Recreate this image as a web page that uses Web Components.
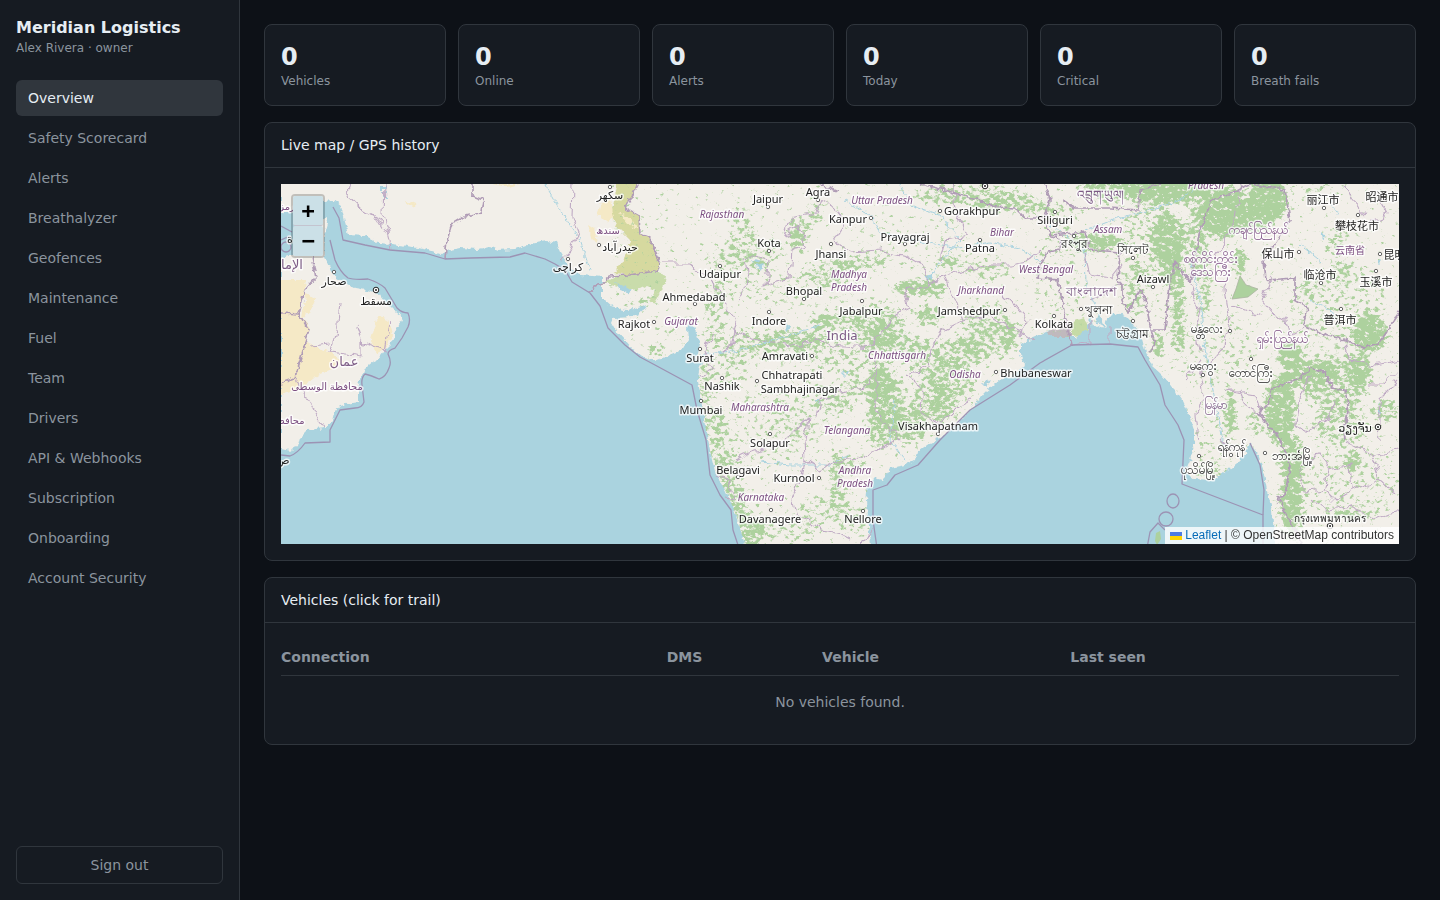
<!DOCTYPE html>
<html lang="en">
<head>
<meta charset="utf-8">
<meta name="viewport" content="width=device-width, initial-scale=1">
<title>Meridian Logistics</title>
<style>
  :root {
    --bg: #0d1117; --panel: #161b22; --line: #30363d; --text: #e6edf3; --muted: #8b949e;
  }
  body { margin: 0; background: var(--bg); color: var(--text); font: 14px/20px "DejaVu Sans", sans-serif; }
</style>
</head>
<body>
<fleet-app>
  <fleet-sidebar slot="side" company="Meridian Logistics" user="Alex Rivera · owner"></fleet-sidebar>
  <stat-row>
    <stat-card value="0">Vehicles</stat-card>
    <stat-card value="0">Online</stat-card>
    <stat-card value="0">Alerts</stat-card>
    <stat-card value="0">Today</stat-card>
    <stat-card value="0">Critical</stat-card>
    <stat-card value="0">Breath fails</stat-card>
  </stat-row>
  <panel-card heading="Live map / GPS history"><live-map></live-map></panel-card>
  <panel-card heading="Vehicles (click for trail)"><vehicle-table></vehicle-table></panel-card>
</fleet-app>

<script>
class Base extends HTMLElement {
  connectedCallback() {
    if (!this.shadowRoot) this.attachShadow({ mode: "open" }).innerHTML = this.render();
  }
}

customElements.define("fleet-app", class extends Base {
  render() {
    return `<style>
      :host { display: grid; grid-template-columns: 240px minmax(0, 1fr); min-height: 100vh; }
      main { display: flex; flex-direction: column; gap: 16px; padding: 24px; }
    </style><slot name="side"></slot><main><slot></slot></main>`;
  }
});

customElements.define("fleet-sidebar", class extends Base {
  render() {
    const items = ["Overview", "Safety Scorecard", "Alerts", "Breathalyzer", "Geofences", "Maintenance", "Fuel",
      "Team", "Drivers", "API &amp; Webhooks", "Subscription", "Onboarding", "Account Security"];
    return `<style>
      :host { display: flex; flex-direction: column; box-sizing: border-box; padding: 16px;
        background: var(--panel); border-right: 1px solid var(--line); }
      header { margin-bottom: 24px; }
      h1 { margin: 0; font-size: 16px; line-height: 24px; }
      p { margin: 0; font-size: 12px; line-height: 16px; color: var(--muted); }
      nav { display: flex; flex-direction: column; gap: 4px; flex: 1; }
      a { padding: 8px 12px; border-radius: 6px; color: var(--muted); text-decoration: none; }
      a[aria-current] { background: var(--line); color: var(--text); }
      button { font: inherit; color: var(--muted); background: none; border: 1px solid var(--line);
        border-radius: 6px; padding: 8px 12px; cursor: pointer; }
    </style>
    <header><h1>${this.getAttribute("company")}</h1><p>${this.getAttribute("user")}</p></header>
    <nav>${items.map((t, i) => `<a href="#"${i ? "" : ' aria-current="page"'}>${t}</a>`).join("")}</nav>
    <button type="button">Sign out</button>`;
  }
});

customElements.define("stat-row", class extends Base {
  render() {
    return `<style>:host { display: grid; grid-template-columns: repeat(6, minmax(0, 1fr)); gap: 12px; }</style><slot></slot>`;
  }
});

customElements.define("stat-card", class extends Base {
  render() {
    return `<style>
      :host { display: block; padding: 16px; background: var(--panel); border: 1px solid var(--line); border-radius: 8px; }
      b { display: block; font-size: 24px; line-height: 32px; }
      span { display: block; font-size: 12px; line-height: 16px; color: var(--muted); }
    </style><b>${this.getAttribute("value")}</b><span><slot></slot></span>`;
  }
});

customElements.define("panel-card", class extends Base {
  render() {
    return `<style>
      :host { display: block; background: var(--panel); border: 1px solid var(--line); border-radius: 8px; }
      h2 { margin: 0; padding: 12px 16px; font-size: 14px; font-weight: 400; border-bottom: 1px solid var(--line); }
      div { padding: 16px; }
    </style><h2>${this.getAttribute("heading")}</h2><div><slot></slot></div>`;
  }
});

customElements.define("vehicle-table", class extends Base {
  render() {
    return `<style>
      :host { display: block; color: var(--muted); }
      table { width: 100%; border-collapse: separate; border-spacing: 0; table-layout: fixed; }
      th { padding: 8px 0; text-align: left; border-bottom: 1px solid var(--line); }
      th:nth-child(1) { width: 34.5%; } th:nth-child(2) { width: 13.9%; } th:nth-child(3) { width: 22.2%; }
      td { padding: 16px 0; text-align: center; }
    </style>
    <table><thead><tr><th scope="col">Connection</th><th scope="col">DMS</th><th scope="col">Vehicle</th><th scope="col">Last seen</th></tr></thead>
    <tbody><tr><td colspan="4">No vehicles found.</td></tr></tbody></table>`;
  }
});

/* Map geometry. One unit is one map pixel; the view starts at 281,184. */
const WEST_ASIA = "M281 180H660V300L602 300 602 277 592 276 582 275 575 272 568 264 563 257 560 252 556 243 548 241 530 244 515 249 498 250 490 246 478 249 460 248 450 250 440 254 428 250 408 246 391 244 378 243 365 236 349 235 345 222 341 206 333 200 324 201 281 214Z";
const OMAN = "M281 258L292 255 300 245 316 232 325 216 328 222 324 236 325 257 330 268 336 278 345 283 355 288 367 290 378 293 385 302 393 310 403 317 399 325 395 335 390 345 383 352 377 360 370 364 364 370 361 378 358 388 358 402 340 405 334 412 332 420 326 428 308 430 300 438 298 446 290 451 281 449Z";
const INDIA = "M606 180L615 277 603 288 602 294 605 300 612 306 625 310 635 309 647 305 642 312 632 317 614 318 612 323 616 330 625 340 632 348 645 358 655 361 670 355 682 350 688 340 687 328 689 324 694 325 697 335 700 345 697 358 702 363 699 370 698 380 701 398 704 420 707 435 711 455 716 475 725 490 732 505 738 520 742 535 746 548 871 548 870 532 867 518 866 500 868 485 874 478 882 480 885 475 890 468 905 465 915 460 917 452 930 443 945 435 960 422 975 405 985 392 1000 380 1010 377 1025 365 1020 355 1020 345 1028 340 1040 335 1050 330 1060 337 1075 337 1080 332 1095 325 1105 328 1107 318 1118 312 1128 318 1135 327 1142 339 1145 350 1152 366 1162 375 1172 386 1182 400 1188 412 1194 430 1194 445 1190 460 1185 472 1195 479 1210 480 1220 475 1235 465 1245 455 1250 443 1258 455 1263 470 1267 490 1272 510 1275 548 1405 548V180Z";

/* cx, cy, rx, ry, density */
const FOREST = [
  [1225,212,26,26,1],[1268,200,20,24,1],[1250,216,26,16,1],[1165,190,45,14,1],[1108,190,30,12,.7],[1096,242,26,9,.95],
  [1168,240,18,28,.8],[1172,260,12,28,.8],[1198,230,12,28,.6],[1240,262,7,14,.9],[1178,310,7,45,.8],
  [1135,290,12,26,.5],[1128,340,8,22,.45],[1158,345,6,14,.8],[1205,290,8,26,.55],[1200,262,14,12,.6],
  [1290,354,14,14,.9],[1230,412,6,24,.9],[1280,410,16,36,.9],[1310,372,28,14,.8],[1335,385,34,28,.55],[1360,370,12,16,.9],
  [1292,460,12,26,.9],[1292,505,12,34,.95],[1255,425,6,16,.55],[1340,425,30,18,.5],[1370,335,18,18,.9],[1352,462,8,10,.85],
  [1385,410,14,12,.6],[1350,515,28,6,.6],[1368,320,12,10,.7],[1290,384,10,10,.6],[1335,240,10,16,.5],[1342,272,8,12,.5],[1306,290,14,10,.3],[1315,190,14,8,.4],
  [970,196,60,10,.55],[1010,205,40,9,.55],[1050,210,26,6,.45],[948,262,12,6,.85],[920,288,28,8,.9],[860,262,30,8,.55],[830,272,26,14,.45],
  [845,318,24,7,.6],[822,322,14,8,.75],[880,325,26,24,.48],[882,335,12,18,.65],[928,316,14,10,.75],[912,345,18,10,.5],
  [984,270,26,10,.45],[985,320,24,16,.52],[1010,335,8,14,.8],[985,345,30,16,.45],[960,352,26,16,.5],[952,380,24,20,.6],[930,400,20,22,.52],
  [885,400,20,30,.65],[880,385,12,18,.85],[908,425,20,18,.72],[880,430,14,20,.6],[945,410,14,16,.5],[925,360,18,18,.5],[855,385,14,10,.48],
  [838,400,22,10,.4],[795,340,34,9,.48],[760,345,28,7,.48],[715,320,12,30,.4],[728,260,22,16,.42],[745,240,16,18,.42],[742,215,12,12,.38],
  [800,230,12,14,.48],[798,240,8,14,.6],[815,212,8,14,.5],[720,290,10,14,.42],[760,262,14,12,.42],[775,248,10,10,.42],[655,350,9,5,.85],[670,330,10,6,.35],[640,302,20,6,.35],
  [704,375,8,22,.45],[706,408,7,24,.48],[718,440,8,34,.48],[728,474,9,22,.6],[738,505,10,22,.65],[750,530,12,18,.68],[765,530,16,10,.45],
  [836,475,8,28,.6],[842,505,8,26,.48],[852,465,16,9,.5],[858,520,12,16,.42],[820,510,20,14,.38],[800,530,22,12,.36],[765,345,50,20,.3],
  [850,350,60,26,.34],[790,290,60,18,.26],[730,370,20,18,.32],[760,430,50,40,.22],[810,410,40,30,.24],[920,240,60,30,.12],[1060,280,30,40,.16],
  [1215,350,40,40,.2],[1215,440,20,40,.2],[1340,310,50,50,.26],[1350,480,50,40,.24],[1060,230,20,20,.26],[1150,240,30,40,.34],[1210,470,18,9,.32]
];

const BORDERS_MAJOR = [
  "M638 184L625 208 639 216 640 234 650 238 655 252 660 262 657 272 648 272 630 275 608 276 606 282 595 286 590 293",
  "M473 184V196L483 200 481 213 465 216 452 224 447 240 445 258",
  "M920 184L945 190 960 195 980 200 995 207 1015 208 1025 218 1045 218",
  "M1045 184L1050 200 1044 218 1050 235 1062 240 1060 250 1048 252 1040 265 1038 278 1058 280 1062 300 1066 322 1072 345",
  "M1050 235L1085 232 1090 250 1120 252 1118 280 1122 285 1122 300 1128 312 1140 290 1145 298 1150 325 1155 345 1150 352",
  "M1062 200L1075 208 1110 208 1138 210 1140 190 1160 184","M1150 330L1165 330 1168 300 1170 285 1175 262 1190 282 1200 230 1212 200 1235 192 1250 184",
  "M1250 184L1285 190 1290 220 1278 240 1264 260 1266 280 1295 278 1295 300 1308 308 1303 325 1325 335 1345 340 1365 348 1380 342 1400 312",
  "M1258 412L1280 440 1290 465 1285 495 1278 498 1292 525 1302 544","M1258 412L1268 405 1272 388 1300 378 1310 368 1325 372 1332 388 1345 390 1348 405 1344 430 1345 440",
  "M281 313L299 314 309 330 295 378 281 383","M299 314L305 290 316 278 312 256","M820 184L838 192"
];
const BORDERS_MINOR = [
  "M573 184L572 218 578 232 570 250 560 260","M384 184L383 215 390 240 391 250","M350 184L346 195 360 208 378 218 388 235",
  "M660 264L690 264 705 275 715 285 722 300 732 312 738 325 732 345 720 355 735 342",
  "M738 300L748 280 745 258 760 256 768 262 766 285 790 278 792 250 805 245 800 225 785 235 790 218 815 212 820 200 838 210 845 225 835 240 850 252",
  "M732 330L760 340 800 346 815 338 830 345 870 348 882 330 895 318 910 308 905 290 930 285",
  "M850 252L880 250 905 256 925 268 928 285 945 275 965 270 990 265 1010 265 1025 262 1040 250",
  "M952 184L955 200 958 220 968 236 945 240 940 262","M945 275L955 300 962 320 942 330 930 350 928 365 910 375",
  "M962 320L990 315 1005 325 1020 332 1035 340","M1000 290L1015 305 1028 320 1020 335",
  "M875 350L878 380 875 410 890 430 900 440","M905 375L922 388 920 410 940 425 960 405 970 400",
  "M815 420L820 400 840 392 870 385 875 372","M735 460L745 455 760 450 780 445 795 430 808 418 805 440 806 460",
  "M715 475L728 480 735 500 725 498","M806 460L800 482 792 500 795 515 810 520 820 530 835 532 850 540","M806 460L820 470 840 460 860 458 880 450 895 440",
  "M700 375L712 370 705 350 712 335","M860 544L868 536 872 530","M340 300L338 325 332 345 330 352 362 356 362 342 385 350 390 320","M358 325L362 342",
  "M309 345L330 343","M296 378L314 412 326 428","M1240 184L1235 220 1215 260 1230 275 1225 290 1230 320 1225 345 1200 375 1205 400 1195 415 1198 440",
  "M1270 278L1262 300 1275 315 1285 320 1288 335 1305 326","M1232 305L1250 312 1262 315","M1258 412L1245 405 1240 390 1225 390",
  "M1310 375L1300 400 1295 425 1310 432 1330 415 1335 400","M1305 460L1320 455 1330 470 1325 490 1305 492 1300 475Z","M1330 470L1350 465 1352 490 1335 500 1325 490",
  "M1352 490L1380 480 1398 495 M1380 480L1372 455 1345 440 M1372 455L1398 450 M1380 440L1378 400 1398 380","M1310 500L1330 510 1350 505 1375 520 1398 510",
  "M1345 184L1352 200 1365 215 M1380 200L1388 215 1365 225","M1085 255L1090 275 1110 278 1120 265","M1090 300L1110 290 1120 285","M1072 345L1090 342V320","M1110 344V325",
  "M1225 390L1255 395 1260 412 M1220 440L1235 450 M1200 360L1185 380","M1200 350L1195 330 1200 310 1190 285","M1345 345L1350 360 1375 365 1398 360","M1368 384L1385 384 1398 370"
];
const MARITIME = [
  "M333 207L339 218 343 240 365 245 390 250 425 253 445 259 470 258 510 257 525 253 545 259 555 264 565 270 572 282 590 293 600 306 608 328 625 345 640 357 655 365 692 385 697 410 706 440 710 475 720 495 731 510 733 530 739 548",
  "M330 240L335 260Q340 272 348 278Q354 280 368 279Q378 282 385 288L397 308Q402 313 408 313Q411 320 408 327L402 338 395 348Q388 350 388 354Q392 362 389 368Q386 377 379 379Q370 375 365 374Q361 378 362 385L364 402Q362 408 355 408L340 410 335 420 330 430V442L305 443Q298 453 290 456L281 455",
  "M877 548L873 520V490L887 485 895 475 918 465 940 440 970 410 1010 385 1040 363 1072 345 1110 344 1138 347 1145 360 1160 385 1165 405 1178 425 1184 440 1182 484 1263 515V548",
  "M1250 443L1260 465 1264 490 1263 515","M1147 548L1150 532 1158 523 1165 530","M281 226L292 232 M281 240L290 236"
];
const WATER = [
  "M845 200L870 215 880 232 910 240 960 248 990 242 1020 248 1040 262","M900 184L910 205 940 215 960 240","M1050 225L1085 250 1086 285 1100 315 1105 330",
  "M1085 230L1110 220 1150 210 1180 200 1200 184","M760 462L790 465 830 465 850 455","M700 355L740 350 790 335 820 325","M545 184L560 210 580 240 590 270",
  "M1190 260L1200 300 1205 350 1215 400 1225 450","M960 240L940 262 930 280","M895 400L890 440 905 460","M1310 300L1330 310 1335 320","M1300 245L1322 262","M1330 200L1338 215"
];

/* x, y (middle of the line), text, kind: c city, s state, r region, n country; b marks the taller scripts */
const LABELS = [
  [768,199,"Jaipur","c"],[818,192,"Agra","c"],[882,200,"Uttar Pradesh","s"],[722,214,"Rajasthan","s"],[848,219,"Kanpur","c"],
  [972,211,"Gorakhpur","c"],[1055,220,"Siliguri","c"],[1108,229,"Assam","s"],[769,243,"Kota","c"],[905,237,"Prayagraj","c"],
  [1002,232,"Bihar","s"],[831,254,"Jhansi","c"],[980,248,"Patna","c"],[720,274,"Udaipur","c"],[849,274,"Madhya","s"],[849,287,"Pradesh","s"],
  [1046,269,"West Bengal","s"],[1153,279,"Aizawl","c"],[804,291,"Bhopal","c"],[694,297,"Ahmedabad","c"],[981,290,"Jharkhand","s"],
  [634,324,"Rajkot","c"],[681,321,"Gujarat","s"],[769,321,"Indore","c"],[861,311,"Jabalpur","c"],[969,311,"Jamshedpur","c"],
  [1054,324,"Kolkata","c"],[842,336,"India","n"],[700,358,"Surat","c"],[785,356,"Amravati","c"],[897,355,"Chhattisgarh","s"],
  [965,374,"Odisha","s"],[1036,373,"Bhubaneswar","c"],[792,375,"Chhatrapati","c"],[800,389,"Sambhajinagar","c"],[722,386,"Nashik","c"],
  [701,410,"Mumbai","c"],[760,407,"Maharashtra","s"],[847,430,"Telangana","s"],[938,426,"Visakhapatnam","c"],[770,443,"Solapur","c"],
  [738,470,"Belagavi","c"],[794,478,"Kurnool","c"],[855,470,"Andhra","s"],[855,483,"Pradesh","s"],[761,497,"Karnataka","s"],
  [770,519,"Davanagere","c"],[863,519,"Nellore","c"],[1206,185,"Pradesh","s"],
  [610,195,"سکھر","c"],[608,230,"سندھ","r"],[620,247,"حیدرآباد","c"],[568,267,"کراچی","c"],[287,206,"رمز","r"],[290,239,"ة","c"],
  [292,265,"الإما","n"],[334,281,"صحار","c"],[376,301,"مسقط","c"],[344,362,"عمان","n"],[327,386,"محافظة الوسطى","r"],[290,420,"محافظ","r"],[283,460,"ص","c"],
  [1100,195,"འབྲུག་ཡུལ།","n b"],[1074,244,"রংপুর","c b"],[1133,250,"সিলেট","c b"],[1091,292,"বাংলাদেশ","n"],[1098,310,"খুলনা","c b"],[1132,334,"চট্টগ্রাম","c b"],
  [1258,230,"ကချင်ပြည်နယ်","r b"],[1211,259,"စစ်ကိုင်းတိုင်း","r b"],[1211,272,"ဒေသကြီး","r b"],[1207,329,"မန္တလေး","c b"],[1282,339,"ရှမ်းပြည်နယ်","r b"],
  [1203,366,"မကွေး","c b"],[1251,373,"တောင်ကြီး","c b"],[1215,405,"မြန်မာ","n b"],[1231,447,"ရန်ကုန်","c b"],[1292,456,"ဘားအံမြို့","c b"],[1198,470,"ပုသိမ်မြို့","c b"],
  [1355,428,"ວຽງຈັນ","c"],[1330,518,"กรุงเทพมหานคร","c t"],
  [1323,200,"丽江市","c"],[1382,197,"昭通市","c"],[1357,226,"攀枝花市","c"],[1350,250,"云南省","r"],[1278,254,"保山市","c"],[1400,255,"昆明市","c"],
  [1320,275,"临沧市","c"],[1376,282,"玉溪市","c"],[1340,320,"普洱市","c"]
];
const TOWNS = [[768,207],[818,200],[871,218],[940,211],[1055,212],[769,251],[905,244],[831,244],[980,240],[720,266],[1153,287],[804,299],
  [695,304],[654,322],[769,312],[862,301],[1005,310],[1054,316],[700,349],[812,356],[996,372],[757,381],[722,378],[701,401],[938,434],
  [770,434],[738,477],[819,478],[771,510],[863,511],[610,187],[599,245],[568,259],[334,272],[1074,236],[1133,258],[1081,309],[1133,321],
  [1230,331],[1203,375],[1251,359],[1231,455],[1265,453],[1199,456],[1324,208],[1358,215],[1299,252],[1380,254],[1321,283],[1376,271],[1341,309]];
const CAPITALS = [[376,290],[985,186],[1378,427],[1330,526]];

customElements.define("live-map", class extends Base {
  render() {
    const paths = list => list.map(d => `<path d="${d}"/>`).join("");
    return `<style>
      :host { display: block; position: relative; height: 360px; overflow: hidden; background: #aad3df; }
      svg.map { display: block; width: 100%; height: 100%; }
      text { font: 11px "Noto Sans", "DejaVu Sans", "Noto Sans CJK SC", sans-serif; text-anchor: middle; fill: #222;
        stroke: rgba(255,255,255,.75); stroke-width: 3px; stroke-linejoin: round; paint-order: stroke; }
      .s { font-size: 10px; font-style: italic; fill: #7c4f82; }
      .r { font-size: 10px; fill: #7c4f82; }
      .n { font-size: 13px; fill: #7d5c86; }
      .t { font-size: 10px; }
      .b { font-size: 12px; }
      :lang(zh) { font-size: 11px; }
      .zoom { position: absolute; left: 10px; top: 10px; display: flex; flex-direction: column;
        border: 2px solid rgba(0,0,0,.2); border-radius: 4px; background-clip: padding-box; }
      .zoom button { width: 30px; height: 30px; padding: 0; border: 0; background: #cbe0e7; color: #000;
        font: bold 22px/30px "DejaVu Sans Mono", monospace; border-radius: 2px; cursor: pointer; }
      .zoom button:first-child { border-bottom: 1px solid #c4c4cf; }
      .credit { position: absolute; right: 0; bottom: 0; display: flex; align-items: center; padding: 0 5px;
        background: rgba(255,255,255,.8); color: #333; font: 12px/17px "Liberation Sans", sans-serif; white-space: pre; }
      .credit a { display: flex; align-items: center; gap: 3px; color: #066bb8; text-decoration: none; }
    </style>
    <svg class="map" viewBox="281 184 1118 360" preserveAspectRatio="xMidYMid slice" role="img" aria-label="Map">
      <defs>
        <filter id="trees" filterUnits="userSpaceOnUse" x="281" y="184" width="1118" height="360" color-interpolation-filters="sRGB">
          <feGaussianBlur in="SourceAlpha" stdDeviation="3" result="d"/>
          <feTurbulence type="fractalNoise" baseFrequency=".2 .26" numOctaves="4" seed="7"/>
          <feColorMatrix values="0 0 0 0 0 0 0 0 0 0 0 0 0 0 0 1 0 0 0 0" result="n"/>
          <feComposite in="d" in2="n" operator="arithmetic" k2=".45" k3="1"/>
          <feComponentTransfer result="m"><feFuncA type="linear" slope="7" intercept="-4.8"/></feComponentTransfer>
          <feFlood flood-color="#add19e"/>
          <feComposite in2="m" operator="in"/>
        </filter>
        <filter id="rough" filterUnits="userSpaceOnUse" x="270" y="174" width="1140" height="380" color-interpolation-filters="sRGB">
          <feTurbulence type="fractalNoise" baseFrequency=".12" numOctaves="1" seed="3"/>
          <feDisplacementMap in="SourceGraphic" scale="12" xChannelSelector="R" yChannelSelector="G"/>
        </filter>
        <filter id="coast" filterUnits="userSpaceOnUse" x="270" y="174" width="1140" height="380" color-interpolation-filters="sRGB">
          <feTurbulence type="fractalNoise" baseFrequency=".2" numOctaves="2" seed="5"/>
          <feDisplacementMap in="SourceGraphic" scale="6" xChannelSelector="R" yChannelSelector="G"/>
        </filter>
        <clipPath id="land"><path d="${INDIA}"/></clipPath>
      </defs>
      <rect x="281" y="184" width="1118" height="360" fill="#aad3df"/>
      <g filter="url(#coast)" fill="#f2efe9">
        <path d="${WEST_ASIA}"/><path d="${INDIA}"/><path d="${OMAN}"/>
        <path d="M602 284L616 276 650 270 666 276 664 286 654 304 644 298 650 288 630 290 610 284Z" fill="#c9dcab"/>
        <path d="M616 283L624 286 632 291 624 296Z" fill="#aad3df"/>
        <path d="M605 296L612 288 630 294 646 286 656 290 650 300 636 303 622 307 611 304Z"/>
        <path d="M618 180H640L625 208 639 216 640 234 650 238 655 252 660 262 657 272 648 272 630 275 614 273 622 262 628 250 630 240 618 228 611 215Z" fill="#d6d99f"/>
        <g fill="#f5e9c6">
          <path d="M281 280L306 280 303 300 299 312 310 328 306 343 330 352 346 363 320 374 300 388 281 395Z"/>
          <path d="M378 316L388 320 392 335 386 348 376 354 371 340Z"/><path d="M306 294L316 298 310 312 302 318Z"/>
          <path d="M600 205L610 198 614 218 606 222 598 214Z"/><path d="M588 224L594 228 598 242 592 240Z"/>
          <path d="M618 212L632 218 638 230 628 224Z"/><path d="M492 184H520L508 187Z"/><path d="M404 201L418 204 412 207Z"/>
        </g>
        <path d="M1072 322L1084 318 1088 328 1080 335 1072 336Z" fill="#c5dba6"/>
        <path d="M1048 331L1070 326 1072 337 1050 337Z" fill="#c0b9bd"/>
        <g fill="#aad3df">
          <path d="M380 187h7v2h-7zM379 192h8v1h-8zM381 197h6v1h-6z"/><path d="M752 260L764 262 762 272Z"/><path d="M982 384L990 380 986 388Z"/>
          <path d="M786 324L790 326 787 333Z"/><path d="M1378 404L1384 412 1378 414Z"/><path d="M1096 322L1100 310 1104 326ZM1086 328L1090 316 1092 328Z"/>
          <path d="M1321 230L1325 236 1323 240ZM1378 258L1382 262 1378 266Z"/><path d="M924 276L934 274 928 282Z"/><path d="M815 400h8l-4 4zM842 372h6l-2 4z"/>
        </g>
      </g>
      <g clip-path="url(#land)">
        <g filter="url(#trees)">${FOREST.map(([x, y, a, b, o]) => `<ellipse cx="${x}" cy="${y}" rx="${a}" ry="${b}" opacity="${o}"/>`).join("")}</g>
      </g>
      <path d="M1240 276L1246 285 1258 289 1248 297 1232 299 1236 289Z" fill="#add19e" stroke="#a9b3a0" stroke-width=".8"/>
      <g filter="url(#coast)" fill="none" stroke="#aad3df" stroke-width="1">${paths(WATER)}</g>
      <g filter="url(#rough)" fill="none" stroke="#bfaac4" stroke-width="1.1">${paths(BORDERS_MINOR)}</g>
      <g filter="url(#coast)" fill="none" stroke="#b09cb6" stroke-width="1.7" stroke-linejoin="round">${paths(BORDERS_MAJOR)}</g>
      <g fill="none" stroke="#9c93b4" stroke-width="1.3" stroke-linejoin="round">${paths(MARITIME)}
        <ellipse cx="1173" cy="501" rx="6" ry="7"/><ellipse cx="1166" cy="519" rx="7" ry="7"/><circle cx="286" cy="247" r="5"/>
      </g>
      <path d="M1156 533l4 -2 1 8 -4 6 -2 -4z" fill="#add19e"/>
      <g fill="#fff" stroke="#555">
        ${TOWNS.map(([x, y]) => `<circle cx="${x}" cy="${y}" r="1.7" stroke-width=".9"/>`).join("")}
        ${CAPITALS.map(([x, y]) => `<circle cx="${x}" cy="${y}" r="2.8" stroke="#222"/><circle cx="${x}" cy="${y}" r="1" fill="#222" stroke="none"/>`).join("")}
      </g>
      ${LABELS.map(([x, y, t, k]) => `<text class="${k}" x="${x}" y="${y + 4}">${t}</text>`).join("")}
    </svg>
    <div class="zoom"><button type="button" aria-label="Zoom in">+</button><button type="button" aria-label="Zoom out">−</button></div>
    <div class="credit"><a href="#"><svg width="12" height="8" viewBox="0 0 12 8" aria-hidden="true"><path fill="#4C7BE1" d="M0 0h12v4H0z"/><path fill="#FFD500" d="M0 4h12v4H0z"/></svg>Leaflet</a><span> | © OpenStreetMap contributors</span></div>`;
  }
});
</script>
</body>
</html>
